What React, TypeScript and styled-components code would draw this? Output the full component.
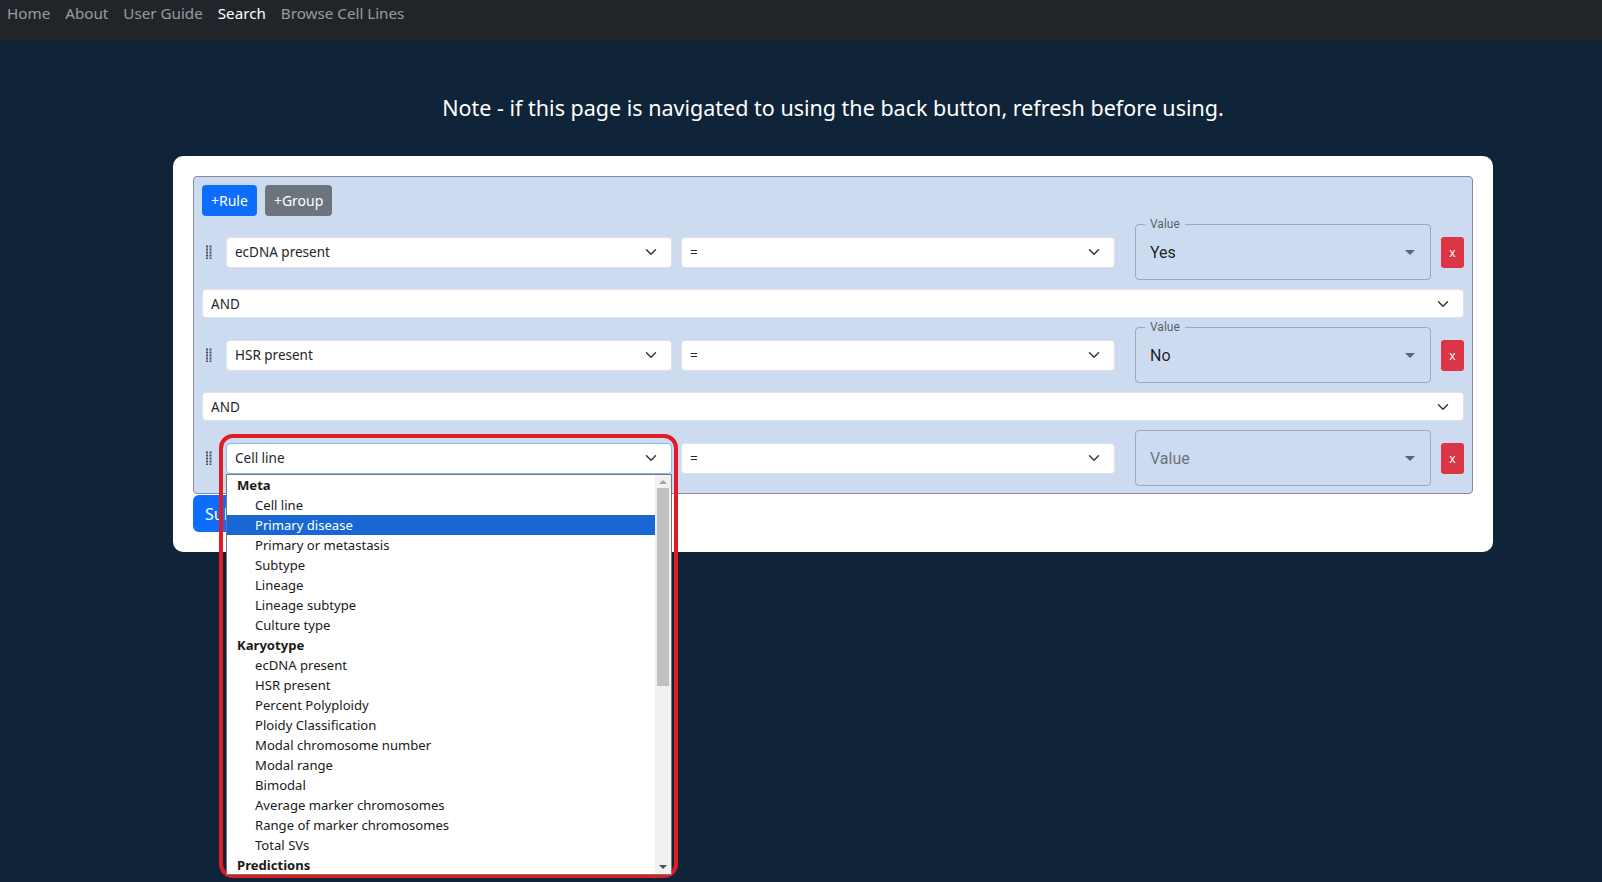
import React from 'react'
import styled, { createGlobalStyle } from 'styled-components'

const GlobalStyle = createGlobalStyle`
	html, body, #root {
		margin: 0;
		padding: 0;
		min-height: 100%;
		height: 100%;
		background: #0f2439;
		font-family: 'Noto Sans', 'Open Sans', sans-serif;
	}
	* {
		box-sizing: border-box;
	}
`

const fieldOptions = [
	{ label: 'Meta', group: true },
	{ label: 'Cell line' },
	{ label: 'Primary disease', active: true },
	{ label: 'Primary or metastasis' },
	{ label: 'Subtype' },
	{ label: 'Lineage' },
	{ label: 'Lineage subtype' },
	{ label: 'Culture type' },
	{ label: 'Karyotype', group: true },
	{ label: 'ecDNA present' },
	{ label: 'HSR present' },
	{ label: 'Percent Polyploidy' },
	{ label: 'Ploidy Classification' },
	{ label: 'Modal chromosome number' },
	{ label: 'Modal range' },
	{ label: 'Bimodal' },
	{ label: 'Average marker chromosomes' },
	{ label: 'Range of marker chromosomes' },
	{ label: 'Total SVs' },
	{ label: 'Predictions', group: true },
]

const rules = [
	{ field: 'ecDNA present', value: 'Yes' },
	{ field: 'HSR present', value: 'No' },
	{ field: 'Cell line', value: '', open: true },
]

const Chevron = () => (
	<svg width='16' height='12' viewBox='0 0 16 16'>
		<path
			d='m2 5 6 6 6-6'
			fill='none'
			stroke='#343a40'
			strokeWidth='2'
			strokeLinecap='round'
			strokeLinejoin='round'
		/>
	</svg>
)

const DragHandle = () => (
	<svg width='6' height='14' viewBox='0 0 6 14'>
		{[0, 1, 2, 3, 4].map((r) =>
			[0, 1].map((c) => (
				<rect
					key={`${r}-${c}`}
					x={c * 3.5}
					y={r * 3 + 0.5}
					width='2'
					height='2'
					fill='#4a4f55'
				/>
			))
		)}
	</svg>
)

const ArrowDrop = () => (
	<svg width='24' height='24' viewBox='0 0 24 24'>
		<path d='M7 10l5 5 5-5z' fill='rgba(0,0,0,0.54)' />
	</svg>
)

function FieldDropdown() {
	return (
		<>
			<Annotation />
			<OptionList>
				<Options>
					{fieldOptions.map((o) => (
						<Option key={o.label} $group={o.group} $active={o.active}>
							{o.label}
						</Option>
					))}
				</Options>
				<ScrollTrack>
					<ScrollArrow $up />
					<ScrollThumb />
					<ScrollArrow />
				</ScrollTrack>
			</OptionList>
		</>
	)
}

function RuleRow({ field, value, open }) {
	return (
		<Row>
			<Handle>
				<DragHandle />
			</Handle>
			<FieldCell>
				<Select $focused={open}>
					<span>{field}</span>
					<Chevron />
				</Select>
				{open && <FieldDropdown />}
			</FieldCell>
			<OperatorCell>
				<Select>
					<span>=</span>
					<Chevron />
				</Select>
			</OperatorCell>
			<ValueBox>
				{value && <ValueLabel>Value</ValueLabel>}
				<ValueText $placeholder={!value}>{value || 'Value'}</ValueText>
				<ArrowDrop />
			</ValueBox>
			<RemoveButton>x</RemoveButton>
		</Row>
	)
}

export default function App() {
	return (
		<Page>
			<GlobalStyle />
			<Navbar>
				<NavLink>Home</NavLink>
				<NavLink>About</NavLink>
				<NavLink>User Guide</NavLink>
				<NavLink $active>Search</NavLink>
				<NavLink>Browse Cell Lines</NavLink>
			</Navbar>
			<Main>
				<Note>
					Note - if this page is navigated to using the back button,
					refresh before using.
				</Note>
				<Card>
					<Group>
						<ButtonRow>
							<SmallButton $variant='primary'>+Rule</SmallButton>
							<SmallButton $variant='secondary'>+Group</SmallButton>
						</ButtonRow>
						{rules.map((r, i) => (
							<React.Fragment key={r.field}>
								{i > 0 && (
									<Combinator>
										<span>AND</span>
										<Chevron />
									</Combinator>
								)}
								<RuleRow {...r} />
							</React.Fragment>
						))}
					</Group>
					<SubmitButton>Submit</SubmitButton>
				</Card>
			</Main>
		</Page>
	)
}

const Page = styled.div`
	min-height: 882px;
	background: #0f2439;
`

const Navbar = styled.nav`
	display: flex;
	align-items: flex-start;
	height: 41px;
	padding: 1px 0 0 0;
	background: #212529;
`

const NavLink = styled.a<{ $active?: boolean }>`
	padding: 0 8px 0 7px;
	font-size: 15.2px;
	line-height: 24px;
	color: ${(p) => (p.$active ? '#ffffff' : 'rgba(255, 255, 255, 0.55)')};
	text-decoration: none;
	cursor: pointer;
`

const Main = styled.main`
	padding: 0 0 0 173px;
`

const Note = styled.h5`
	width: 1320px;
	margin: 52px 0 0 0;
	text-align: center;
	font-size: 21.5px;
	font-weight: 400;
	line-height: 30px;
	color: #ffffff;
`

const Card = styled.div`
	width: 1320px;
	margin-top: 33px;
	padding: 20px;
	background: #ffffff;
	border-radius: 10px;
`

const Group = styled.div`
	display: flex;
	flex-direction: column;
	gap: 9px;
	padding: 8px 8px 7px 8px;
	background: #cddbf0;
	border: 1px solid #8a88a6;
	border-radius: 4px;
`

const ButtonRow = styled.div`
	display: flex;
	gap: 8px;
	margin-bottom: -1px;
`

const SmallButton = styled.button<{ $variant: 'primary' | 'secondary' }>`
	height: 31px;
	padding: 0 9px;
	border: none;
	border-radius: 4px;
	font-family: inherit;
	font-size: 14px;
	color: #ffffff;
	background: ${(p) => (p.$variant === 'primary' ? '#0d6efd' : '#6c757d')};
`

const Row = styled.div`
	display: flex;
	align-items: center;
	height: 56px;
`

const Handle = styled.div`
	display: flex;
	align-items: center;
	width: 24px;
	padding-left: 4px;
`

const FieldCell = styled.div`
	position: relative;
	width: 446px;
	margin-right: 9px;
`

const OperatorCell = styled.div`
	width: 434px;
	margin-right: 20px;
`

const Select = styled.div<{ $focused?: boolean }>`
	display: flex;
	align-items: center;
	justify-content: space-between;
	height: 31px;
	padding: 0 12px 0 8px;
	background: #ffffff;
	border: 1px solid ${(p) => (p.$focused ? '#86b7fe' : '#dee2e6')};
	border-radius: 4px;
	font-size: 13.5px;
	color: #212529;
`

const Combinator = styled(Select)`
	height: 29px;
	padding-left: 8px;
`

const ValueBox = styled.div`
	position: relative;
	display: flex;
	align-items: center;
	justify-content: space-between;
	width: 296px;
	height: 56px;
	margin-right: 10px;
	padding: 0 8px 0 14px;
	border: 1px solid rgba(0, 0, 0, 0.23);
	border-radius: 4px;
	font-family: Roboto, sans-serif;
`

const ValueLabel = styled.span`
	position: absolute;
	top: -9px;
	left: 9px;
	padding: 0 5px;
	background: #cddbf0;
	font-size: 12px;
	line-height: 16px;
	color: rgba(0, 0, 0, 0.6);
`

const ValueText = styled.span<{ $placeholder?: boolean }>`
	font-size: 16px;
	color: ${(p) => (p.$placeholder ? 'rgba(0, 0, 0, 0.5)' : 'rgba(0, 0, 0, 0.87)')};
`

const RemoveButton = styled.button`
	width: 23px;
	height: 31px;
	padding: 0;
	border: none;
	border-radius: 3px;
	background: #dc3545;
	color: #ffffff;
	font-family: inherit;
	font-size: 12px;
`

const SubmitButton = styled.button`
	height: 37px;
	margin-top: 1px;
	padding: 0 12px;
	border: none;
	border-radius: 6px;
	background: #0d6efd;
	color: #ffffff;
	font-family: inherit;
	font-size: 16px;
`

const Annotation = styled.div`
	position: absolute;
	top: -9px;
	left: -7px;
	width: 459px;
	height: 444px;
	border: 4px solid #e31b23;
	border-radius: 14px;
	z-index: 2;
	pointer-events: none;
`

const OptionList = styled.div`
	position: absolute;
	top: 100%;
	left: 0;
	display: flex;
	width: 446px;
	height: 401px;
	background: #ffffff;
	border: 1px solid #767676;
	z-index: 3;
`

const Options = styled.div`
	flex: 1;
`

const Option = styled.div<{ $group?: boolean; $active?: boolean }>`
	height: 20px;
	padding-left: ${(p) => (p.$group ? '10px' : '28px')};
	font-size: 13.1px;
	line-height: 20px;
	font-weight: ${(p) => (p.$group ? 700 : 400)};
	color: ${(p) => (p.$active ? '#ffffff' : '#1a1a1a')};
	background: ${(p) => (p.$active ? '#1967d2' : 'transparent')};
	white-space: nowrap;
`

const ScrollTrack = styled.div`
	display: flex;
	flex-direction: column;
	align-items: center;
	width: 16px;
	background: #f1f1f1;
`

const ScrollThumb = styled.div`
	width: 12px;
	height: 198px;
	margin-top: 1px;
	background: #c1c1c1;
	flex-shrink: 0;
`

const ScrollArrow = styled.div<{ $up?: boolean }>`
	width: 0;
	height: 0;
	margin: ${(p) => (p.$up ? '5px 0 3px' : 'auto 0 5px')};
	border-left: 4px solid transparent;
	border-right: 4px solid transparent;
	${(p) =>
		p.$up
			? 'border-bottom: 4px solid #a3a3a3;'
			: 'border-top: 4px solid #505050;'}
`
